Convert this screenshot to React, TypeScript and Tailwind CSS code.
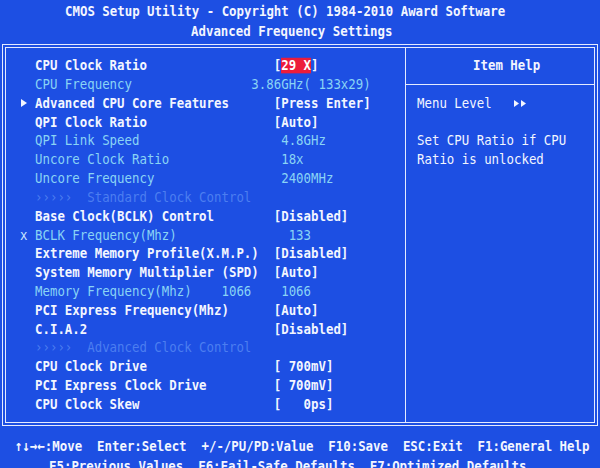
import React from "react";

type Tone = "white" | "cyan" | "dim";

type Row = {
  mark?: "arrow" | "x";
  text: string;
  tone: Tone;
  ratio?: boolean;
};

const toneClass: Record<Tone, string> = {
  white: "font-bold text-[#f3f6ff]",
  cyan: "font-normal text-[#8ad4f5]",
  dim: "font-normal text-[#4c7ef0]",
};

//======= Label / value in text columns =======//
const line = (label: string, value: string, col = 32) =>
  label.padEnd(col) + value;

const rows: Row[] = [
  { text: line("CPU Clock Ratio", ""), tone: "white", ratio: true },
  { text: line("CPU Frequency", "3.86GHz( 133x29)", 29), tone: "cyan" },
  { mark: "arrow", text: line("Advanced CPU Core Features", "[Press Enter]"), tone: "white" },
  { text: line("QPI Clock Ratio", "[Auto]"), tone: "white" },
  { text: line("QPI Link Speed", " 4.8GHz"), tone: "cyan" },
  { text: line("Uncore Clock Ratio", " 18x"), tone: "cyan" },
  { text: line("Uncore Frequency", " 2400MHz"), tone: "cyan" },
  { text: "›››››  Standard Clock Control", tone: "dim" },
  { text: line("Base Clock(BCLK) Control", "[Disabled]"), tone: "white" },
  { mark: "x", text: line("BCLK Frequency(Mhz)", "  133"), tone: "cyan" },
  { text: line("Extreme Memory Profile(X.M.P.)", "[Disabled]"), tone: "white" },
  { text: line("System Memory Multiplier (SPD)", "[Auto]"), tone: "white" },
  { text: line("Memory Frequency(Mhz)    1066", " 1066"), tone: "cyan" },
  { text: line("PCI Express Frequency(Mhz)", "[Auto]"), tone: "white" },
  { text: line("C.I.A.2", "[Disabled]"), tone: "white" },
  { text: "›››››  Advanced Clock Control", tone: "dim" },
  { text: line("CPU Clock Drive", "[ 700mV]"), tone: "white" },
  { text: line("PCI Express Clock Drive", "[ 700mV]"), tone: "white" },
  { text: line("CPU Clock Skew", "[   0ps]"), tone: "white" },
];

const stretch = "inline-block origin-center scale-y-[1.2] whitespace-pre leading-none";

function Triangle({ className }: { className?: string }) {
  return (
    <svg width="6" height="8" viewBox="0 0 6 8" className={className}>
      <polygon points="0,0 6,4 0,8" fill="#f3f6ff" />
    </svg>
  );
}

function SetupRow({ row }: { row: Row }) {
  return (
    <div className="flex h-[18.82px] items-center">
      <span className="flex w-[15px] items-center">
        {row.mark === "arrow" && <Triangle className="ml-[1px]" />}
        {row.mark === "x" && (
          <span className={`${stretch} font-normal text-[#c9e6ff]`}>x</span>
        )}
      </span>
      <span className={`${stretch} ${toneClass[row.tone]}`}>
        {row.text}
        {row.ratio && (
          <>
            [
            <span className="inline-block h-[12.5px] bg-[#ec1c3b] leading-[12.5px] text-white">
              29 X
            </span>
            ]
          </>
        )}
      </span>
    </div>
  );
}

export default function App() {
  return (
    <div className="h-[468px] w-[600px] overflow-hidden bg-[#1d4fe3] font-['DejaVu_Sans_Mono',monospace] text-[12.4px] font-bold text-[#f3f6ff]">
      <header className="h-[44px] pt-[2px]">
        <div className="flex h-[19px] items-center pl-[65px]">
          <span className={stretch}>
            CMOS Setup Utility - Copyright (C) 1984-2010 Award Software
          </span>
        </div>
        <div className="flex h-[21px] items-center pl-[191px]">
          <span className={stretch}>Advanced Frequency Settings</span>
        </div>
      </header>

      <div className="ml-[2px] h-[382px] w-[596px] border border-[#e4ebff] p-[2px]">
        <div className="flex h-full border border-[#e4ebff]">
          <section className="w-[399px] pl-[14px] pt-[8px]">
            {rows.map((row, i) => (
              <SetupRow key={i} row={row} />
            ))}
          </section>

          <aside className="flex-1 border-l border-[#e4ebff] pt-[8px]">
            <div className="flex h-[18.82px] items-center pl-[67px]">
              <span className={stretch}>Item Help</span>
            </div>
            <div className="flex h-[18.82px] items-center">
              <div className="h-px w-full bg-[#e4ebff]" />
            </div>
            <div className="flex h-[18.82px] items-center pl-[11px]">
              <span className={`${stretch} font-normal`}>Menu Level   </span>
              <svg width="14" height="7" viewBox="0 0 14 7">
                <polygon points="0,0 5,3.5 0,7" fill="#f3f6ff" />
                <polygon points="7,0 12,3.5 7,7" fill="#f3f6ff" />
              </svg>
            </div>
            <div className="h-[18.82px]" />
            <div className="flex h-[18.82px] items-center pl-[11px]">
              <span className={`${stretch} font-normal`}>Set CPU Ratio if CPU</span>
            </div>
            <div className="flex h-[18.82px] items-center pl-[11px]">
              <span className={`${stretch} font-normal`}>Ratio is unlocked</span>
            </div>
          </aside>
        </div>
      </div>

      <footer className="pt-[10px]">
        <div className="flex h-[20px] items-center pl-[15px]">
          <span className={stretch}>
            ↑↓→←:Move  Enter:Select  +/-/PU/PD:Value  F10:Save  ESC:Exit  F1:General Help
          </span>
        </div>
        <div className="flex h-[20px] items-center pl-[49px]">
          <span className={stretch}>
            F5:Previous Values  F6:Fail-Safe Defaults  F7:Optimized Defaults
          </span>
        </div>
      </footer>
    </div>
  );
}
